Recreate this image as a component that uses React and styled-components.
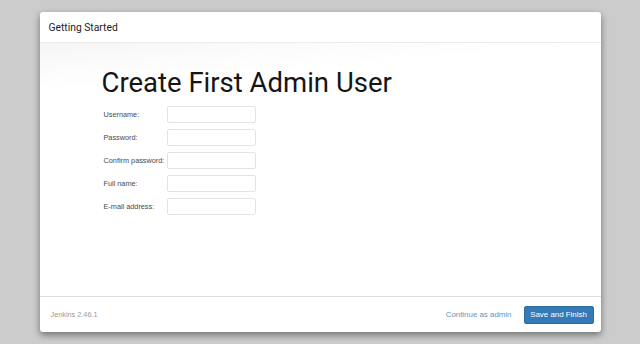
import React from 'react';
import styled, { createGlobalStyle } from 'styled-components';

const GlobalStyle = createGlobalStyle`
  html, body {
    margin: 0;
    padding: 0;
    background: #cccccc;
  }
  body {
    font-family: "Liberation Sans", Arial, sans-serif;
  }
`;

const Page = styled.div`
  width: 640px;
  height: 344px;
  display: flex;
  align-items: center;
  justify-content: center;
`;

const Dialog = styled.div`
  width: 561px;
  height: 320px;
  background: #fff;
  border-radius: 3px;
  box-shadow: 0 3px 7px rgba(0, 0, 0, 0.45);
  display: flex;
  flex-direction: column;
  overflow: hidden;
`;

const Header = styled.div`
  height: 30px;
  flex-shrink: 0;
  border-bottom: 1px solid #ececec;
  display: flex;
  align-items: center;
  padding-left: 9px;
  font-family: Roboto, "Liberation Sans", sans-serif;
  font-size: 10.3px;
  color: #222;
`;

const Body = styled.div`
  flex: 1;
  padding: 24px 0 0 62px;
  background: linear-gradient(175deg, #f5f5f5 0%, #fbfbfb 25px, #ffffff 50px);
`;

const Title = styled.h1`
  margin: 0 0 7px 0;
  font-family: Roboto, "Liberation Sans", sans-serif;
  font-weight: 400;
  font-size: 27.5px;
  line-height: 32px;
  color: #151515;
`;

const Form = styled.div`
  display: flex;
  flex-direction: column;
  gap: 6px;
  padding-left: 2px;
`;

const Row = styled.div`
  display: flex;
  align-items: center;
`;

const Label = styled.label`
  width: 63px;
  flex-shrink: 0;
  font-size: 7.3px;
  color: #4a4a4a;
  white-space: nowrap;
`;

const Input = styled.input`
  width: 89px;
  height: 17px;
  box-sizing: border-box;
  border: 1px solid #e3e3e3;
  border-radius: 2px;
  background: #fff;
  padding: 0 3px;
  font-size: 7.3px;
  outline: none;
`;

const Footer = styled.div`
  height: 35px;
  flex-shrink: 0;
  border-top: 1px solid #dedede;
  display: flex;
  align-items: center;
  padding: 0 7px 0 11px;
`;

const Version = styled.span`
  font-size: 7.3px;
  color: #9a9a9a;
  flex: 1;
`;

const LinkButton = styled.a`
  font-size: 7.9px;
  color: #6f8fb8;
  margin-right: 12px;
  text-decoration: none;
`;

const PrimaryButton = styled.button`
  width: 70px;
  height: 18px;
  padding: 0;
  font-family: "Liberation Sans", Arial, sans-serif;
  font-size: 7.9px;
  color: #fff;
  background: #337ab7;
  border: 1px solid #2e6da4;
  border-radius: 2px;
`;

const fields = [
  { label: 'Username:', type: 'text' },
  { label: 'Password:', type: 'password' },
  { label: 'Confirm password:', type: 'password' },
  { label: 'Full name:', type: 'text' },
  { label: 'E-mail address:', type: 'text' },
];

export default function App() {
  return (
    <Page>
      <GlobalStyle />
      <Dialog>
        <Header>Getting Started</Header>
        <Body>
          <Title>Create First Admin User</Title>
          <Form>
            {fields.map((f) => (
              <Row key={f.label}>
                <Label>{f.label}</Label>
                <Input type={f.type} />
              </Row>
            ))}
          </Form>
        </Body>
        <Footer>
          <Version>Jenkins 2.46.1</Version>
          <LinkButton href="#">Continue as admin</LinkButton>
          <PrimaryButton>Save and Finish</PrimaryButton>
        </Footer>
      </Dialog>
    </Page>
  );
}
